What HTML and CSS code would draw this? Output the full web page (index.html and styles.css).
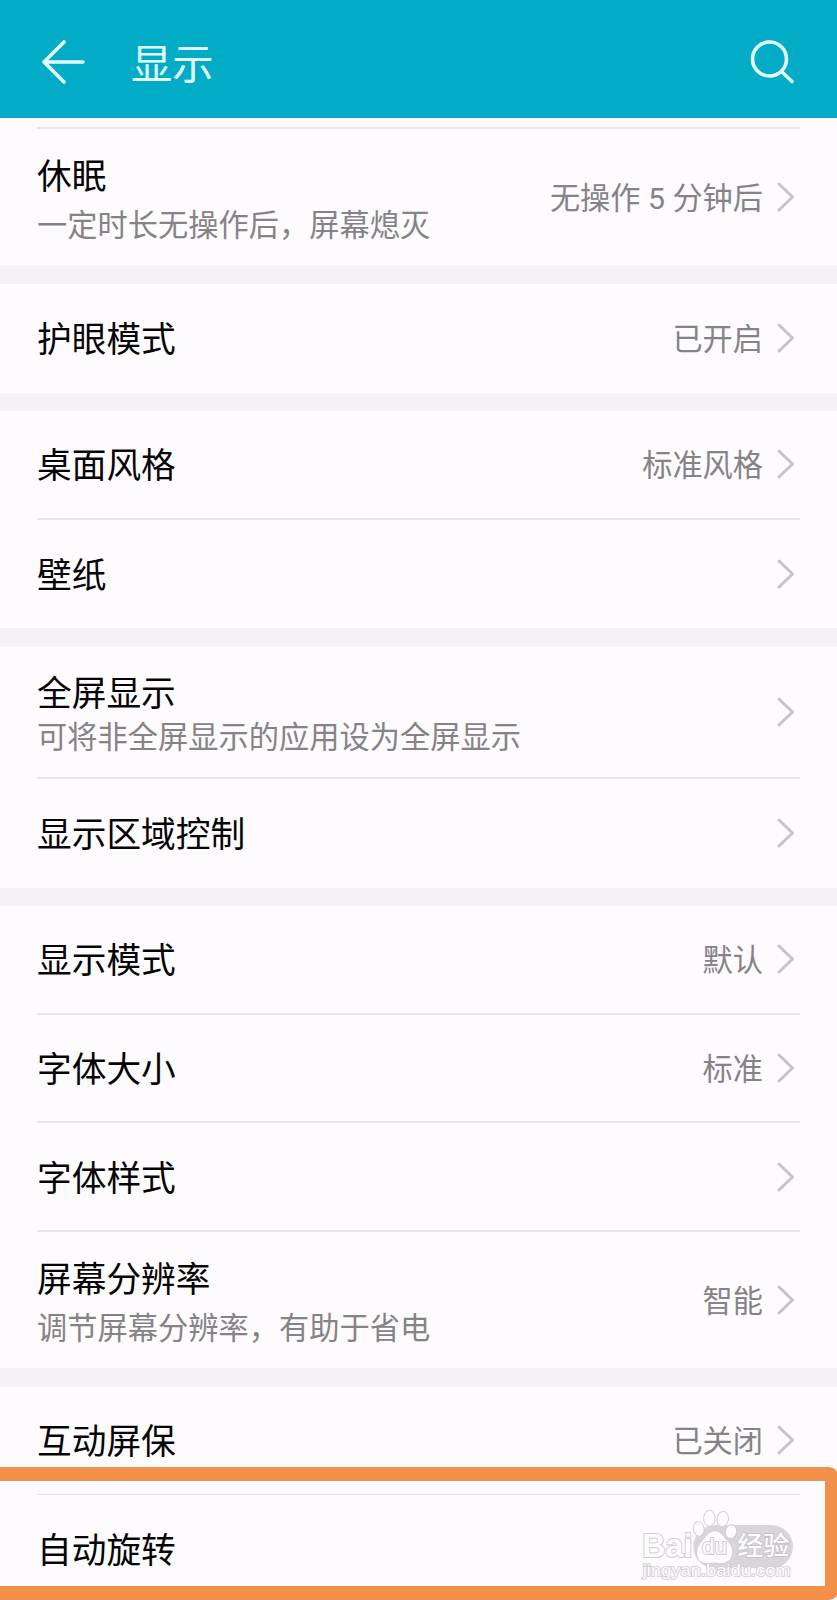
FILE: index.html
```html
<!DOCTYPE html>
<html lang="zh-CN">
  <head>
    <meta charset="UTF-8" />
    <meta name="viewport" content="width=device-width, initial-scale=1.0" />
    <title>显示</title>
    <link rel="stylesheet" href="styles.css">
  </head>
  <body>
    <svg class="symbols" width="0" height="0">
      <symbol id="chevron" viewBox="0 0 18 30">
        <path d="M2 2 L15.5 15 L2 28" />
      </symbol>
    </svg>

    <header class="header">
      <svg class="icon-back" viewBox="0 0 44 44">
        <path d="M22 2 L2 22 L22 42 M2 22 H41" />
      </svg>
      <h1>显示</h1>
      <svg class="icon-search" viewBox="0 0 46 46">
        <circle cx="19.500" cy="20" r="17" />
        <path d="M32 33 L42 42.500" />
      </svg>
    </header>

    <main>
      <section class="group group-first">
        <div class="row row-tall">
          <div class="label">
            <h2>休眠</h2>
            <p>一定时长无操作后，屏幕熄灭</p>
          </div>
          <span class="value">无操作 5 分钟后</span>
          <svg class="chevron"><use href="#chevron" /></svg>
        </div>
      </section>

      <section class="group">
        <div class="row">
          <h2>护眼模式</h2>
          <span class="value">已开启</span>
          <svg class="chevron"><use href="#chevron" /></svg>
        </div>
      </section>

      <section class="group">
        <div class="row">
          <h2>桌面风格</h2>
          <span class="value">标准风格</span>
          <svg class="chevron"><use href="#chevron" /></svg>
        </div>
        <div class="row">
          <h2>壁纸</h2>
          <svg class="chevron"><use href="#chevron" /></svg>
        </div>
      </section>

      <section class="group">
        <div class="row row-medium">
          <div class="label">
            <h2>全屏显示</h2>
            <p>可将非全屏显示的应用设为全屏显示</p>
          </div>
          <svg class="chevron"><use href="#chevron" /></svg>
        </div>
        <div class="row">
          <h2>显示区域控制</h2>
          <svg class="chevron"><use href="#chevron" /></svg>
        </div>
      </section>

      <section class="group">
        <div class="row">
          <h2>显示模式</h2>
          <span class="value">默认</span>
          <svg class="chevron"><use href="#chevron" /></svg>
        </div>
        <div class="row">
          <h2>字体大小</h2>
          <span class="value">标准</span>
          <svg class="chevron"><use href="#chevron" /></svg>
        </div>
        <div class="row">
          <h2>字体样式</h2>
          <svg class="chevron"><use href="#chevron" /></svg>
        </div>
        <div class="row row-tall">
          <div class="label">
            <h2>屏幕分辨率</h2>
            <p>调节屏幕分辨率，有助于省电</p>
          </div>
          <span class="value">智能</span>
          <svg class="chevron"><use href="#chevron" /></svg>
        </div>
      </section>

      <section class="group group-last">
        <div class="row">
          <h2>互动屏保</h2>
          <span class="value">已关闭</span>
          <svg class="chevron"><use href="#chevron" /></svg>
        </div>
        <div class="row">
          <h2>自动旋转</h2>
        </div>
      </section>
    </main>

    <svg class="watermark" viewBox="0 0 711 480">
      <path class="pill" d="M345 255 H514 A65 65 0 0 1 514 385 H345 A65 65 0 0 1 345 255 Z" />
      <g class="paw">
        <ellipse cx="296" cy="267" rx="16" ry="22" transform="rotate(-10 296 267)" />
        <ellipse cx="328" cy="235" rx="17" ry="24" />
        <ellipse cx="368" cy="237" rx="17" ry="23" transform="rotate(10 368 237)" />
        <ellipse cx="393" cy="275" rx="17" ry="21" transform="rotate(12 393 275)" />
        <path d="M344 272 C365 272 372 293 387 307 C405 324 403 360 376 369 C360 374 354 369 344 369 C332 369 326 374 311 370 C284 361 284 325 301 308 C316 293 322 272 344 272 Z" />
      </g>
      <text class="brand" x="127" y="350" textLength="150" lengthAdjust="spacingAndGlyphs">Bai</text>
      <text class="du" x="306" y="342" textLength="75" lengthAdjust="spacingAndGlyphs">du</text>
      <text class="cn" x="412" y="345" textLength="156">经验</text>
      <text class="url" x="128" y="409" textLength="444" lengthAdjust="spacingAndGlyphs">jingyan.baidu.com</text>
    </svg>
    <div class="highlight"></div>
  </body>
</html>
```
FILE: styles.css
```css
:root {
  --header-color: #02abc6;
  --header-text: #e2ffff;
  --page-color: #fdfbfe;
  --band-color: #f4f2f5;
  --line-color: #e6e5e8;
  --muted-color: #858386;
  --highlight-color: #f3914b;
}

* {
  margin: 0;
  padding: 0;
  box-sizing: border-box;
}

body {
  position: relative;
  height: 1600px;
  overflow: hidden;
  background-color: var(--page-color);
  color: #050505;
  font-family: Roboto, "Noto Sans CJK SC", sans-serif;
}

h1,
h2 {
  font-weight: 400;
  white-space: nowrap;
}

.symbols {
  display: none;
}

.header {
  height: 118px;
  padding: 6px 41px 0 42px;
  display: flex;
  align-items: center;
  background-color: var(--header-color);
  color: var(--header-text);
}

.header h1 {
  margin-left: 45px;
  padding-top: 6px;
  flex: 1;
  font-size: 41.3px;
  line-height: 60px;
}

.header svg {
  fill: none;
  stroke: var(--header-text);
  stroke-width: 3.6;
  stroke-linecap: round;
  stroke-linejoin: round;
}

.icon-back {
  width: 44px;
  height: 44px;
}

.icon-search {
  width: 46px;
  height: 46px;
}

main {
  display: flex;
  flex-direction: column;
  gap: 18.6px;
  background-color: var(--band-color);
}

.group {
  padding: 0 37px;
  background-color: var(--page-color);
}

.group-first {
  padding-top: 9px;
}

.group-first .row {
  height: 138.4px;
  border-top: 2px solid var(--line-color);
}

.row {
  height: 108.6px;
  display: flex;
  align-items: center;
}

.row:not(:last-child) {
  border-bottom: 2px solid var(--line-color);
}

.group-last .row:not(:last-child) {
  height: 108px;
  border-bottom-width: 1px;
}

.row-tall {
  height: 136.4px;
}

.row-medium,
.row-medium:not(:last-child) {
  height: 132px;
}

.row h2 {
  padding-top: 4px;
  font-size: 34.7px;
  line-height: 50px;
}

.row .label h2 {
  padding-top: 3px;
}

.label p {
  color: var(--muted-color);
  font-size: 30.25px;
  line-height: 44px;
  white-space: nowrap;
}

.row-tall .label {
  padding-top: 2px;
}

.row-tall p {
  margin-top: 2px;
}

.row-medium .label {
  padding-top: 4px;
}

.row-medium h2 {
  line-height: 46px;
}

.row-medium p {
  line-height: 42px;
}

.value {
  margin-left: auto;
  padding-top: 4px;
  color: var(--muted-color);
  font-size: 30.2px;
  line-height: 44px;
  white-space: nowrap;
}

.chevron {
  width: 18px;
  height: 30px;
  margin: 0 5px 0 auto;
  fill: none;
  stroke: #c6c4c7;
  stroke-width: 3;
  stroke-linecap: round;
  stroke-linejoin: round;
}

.value + .chevron {
  margin-left: 14px;
}

/* orange frame round the last row, open past the left edge */
.highlight {
  position: absolute;
  left: -20px;
  top: 1467px;
  width: 858px;
  height: 133px;
  border: 14px solid var(--highlight-color);
  border-right-width: 13px;
  border-radius: 9px;
}

.watermark {
  position: absolute;
  right: 0;
  bottom: 0;
  width: 237px;
  height: 160px;
}

.pill {
  fill: #d8d6d9;
}

.paw {
  fill: #fdfbfe;
  stroke: #cfcdd0;
  stroke-width: 3;
}

.watermark text {
  font-family: "Liberation Sans", "Noto Sans CJK SC", sans-serif;
  fill: #fdfbfe;
  stroke: #d0ced1;
  paint-order: stroke;
}

.watermark .brand {
  font-size: 102px;
  font-weight: 700;
  stroke-width: 6;
}

.watermark .du {
  font-size: 64px;
  stroke-width: 6;
}

.watermark .cn {
  font-size: 78px;
  font-weight: 500;
  stroke: #c4c2c5;
  stroke-width: 5;
}

.watermark .url {
  font-size: 50px;
  stroke-width: 5;
}
```
